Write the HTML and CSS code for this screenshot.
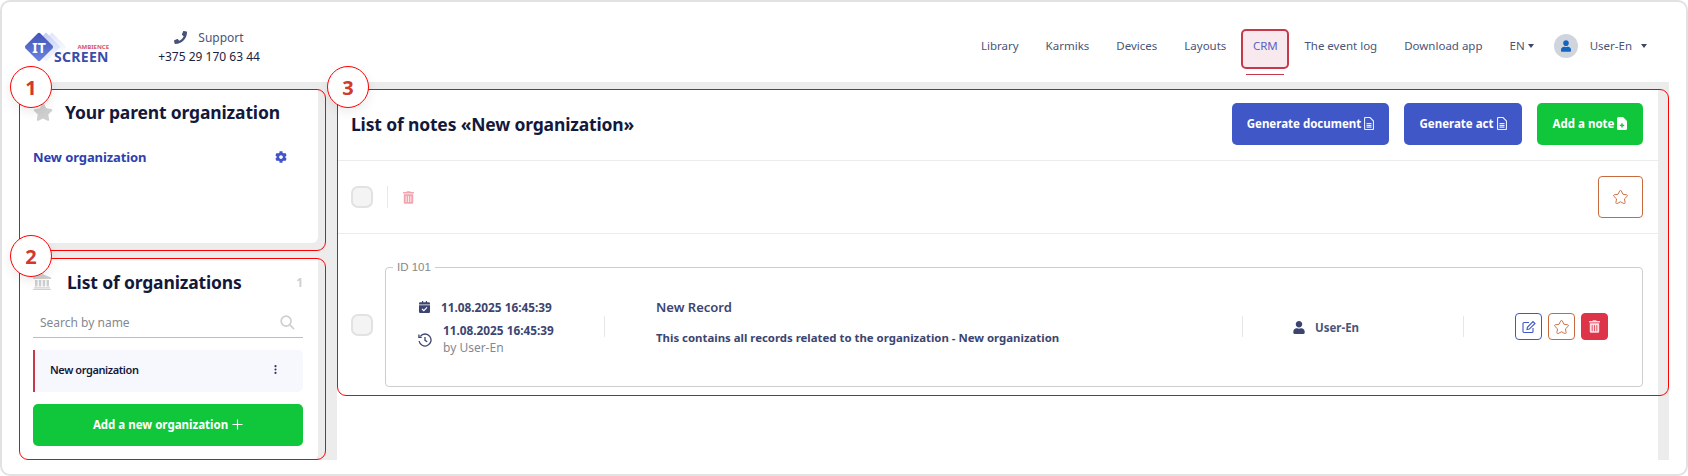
FILE: index.html
```html
<!DOCTYPE html>
<html lang="en">
<head>
<meta charset="utf-8">
<title>CRM</title>
<link rel="stylesheet" href="styles.css">
</head>
<body>
<div class="window">
  <header class="topbar">
    <svg class="logo" viewBox="0 0 90 36" width="90" height="36">
      <defs>
        <linearGradient id="lg" x1="0" y1="0" x2="1" y2="1"><stop offset="0" stop-color="#3f51b5"/><stop offset="1" stop-color="#6f86e0"/></linearGradient>
        <linearGradient id="fa" x1="0" y1="0" x2="0" y2="1"><stop offset="0" stop-color="#dfe4fa"/><stop offset=".75" stop-color="#fff"/></linearGradient>
        <linearGradient id="fb" x1="0" y1="0" x2="0" y2="1"><stop offset="0" stop-color="#c3cdf5"/><stop offset=".75" stop-color="#eef1fc"/></linearGradient>
      </defs>
      <path d="M29 1.500 L43.500 16 L29 30.500 L14.500 16 Z" fill="url(#fa)"/>
      <path d="M23 1.500 L37.500 16 L23 30.500 L8.500 16 Z" fill="url(#fb)"/>
      <rect x="5.500" y="5.500" width="21" height="21" rx="2" transform="rotate(45 16 16)" fill="url(#lg)"/>
      <text class="logo-it" x="16" y="21.500" text-anchor="middle">IT</text>
      <text class="logo-amb" x="86" y="18" text-anchor="end">AMBIENCE</text>
      <text class="logo-scr" x="31" y="30.500">SCREEN</text>
    </svg>
    <div class="support">
      <div class="support-top">
        <svg class="ic-phone" viewBox="0 0 512 512"><path d="M493.4 24.6l-104-24c-11.3-2.6-22.9 3.3-27.5 13.9l-48 112c-4.200 9.800-1.400 21.300 6.900 28l60.600 49.600c-36 76.700-98.900 140.500-177.200 177.200l-49.600-60.600c-6.800-8.300-18.200-11.100-28-6.900l-112 48C3.900 366.500-2 378.100.6 389.400l24 104C27.100 504.200 36.700 512 48 512c256.100 0 464-207.500 464-464 0-11.200-7.700-20.900-18.600-23.400z"/></svg>
        <span>Support</span>
      </div>
      <div class="support-phone">+375 29 170 63 44</div>
    </div>
    <nav class="nav">
      <a class="nav-link">Library</a>
      <a class="nav-link">Karmiks</a>
      <a class="nav-link">Devices</a>
      <a class="nav-link">Layouts</a>
      <a class="nav-link nav-active">CRM</a>
      <a class="nav-link">The event log</a>
      <a class="nav-link">Download app</a>
      <a class="nav-link nav-lang">EN<i class="caret"></i></a>
      <span class="avatar"><svg viewBox="0 0 448 512"><path d="M224 256c70.700 0 128-57.300 128-128S294.700 0 224 0 96 57.300 96 128s57.300 128 128 128zm89.600 32h-16.700c-22.200 10.200-46.900 16-72.900 16s-50.600-5.800-72.900-16h-16.700C60.200 288 0 348.200 0 422.400V464c0 26.500 21.500 48 48 48h352c26.500 0 48-21.500 48-48v-41.600c0-74.200-60.200-134.400-134.400-134.400z"/></svg></span>
      <a class="nav-link nav-user">User-En<i class="caret caret-user"></i></a>
    </nav>
  </header>

  <main class="stage">
    <aside class="sidebar">
      <section class="panel panel-parent">
        <div class="mark mark-1"><span class="badge">1</span></div>
        <div class="panel-head">
          <svg class="ic-star" viewBox="0 0 576 512"><path d="M259.300 17.800L194 150.200 47.900 171.500c-26.200 3.800-36.700 36.100-17.700 54.600l105.700 103-25 145.500c-4.500 26.300 23.200 46 46.400 33.700L288 439.600l130.700 68.700c23.200 12.200 50.900-7.400 46.400-33.700l-25-145.500 105.700-103c19-18.500 8.500-50.800-17.700-54.600L382 150.200 316.700 17.800c-11.700-23.600-45.600-23.900-57.400 0z"/></svg>
          <h2 class="panel-title">Your parent organization</h2>
        </div>
        <div class="parent-row">
          <span class="parent-name">New organization</span>
          <svg class="ic-gear" viewBox="0 0 512 512"><path d="M487.400 315.700l-42.600-24.600c4.300-23.200 4.300-47 0-70.200l42.600-24.600c4.900-2.800 7.100-8.600 5.500-14-11.100-35.600-30-67.800-54.700-94.600-3.800-4.100-10-5.100-14.800-2.300L380.800 110c-17.900-15.400-38.500-27.300-60.800-35.100V25.800c0-5.600-3.900-10.500-9.400-11.700-36.700-8.200-74.300-7.800-109.200 0-5.500 1.200-9.400 6.100-9.400 11.700V75c-22.200 7.900-42.800 19.800-60.800 35.100L88.700 85.500c-4.900-2.800-11-1.900-14.800 2.300-24.700 26.700-43.600 58.900-54.700 94.600-1.700 5.400.6 11.200 5.500 14L67.300 221c-4.300 23.200-4.300 47 0 70.200l-42.600 24.600c-4.900 2.800-7.100 8.600-5.500 14 11.100 35.600 30 67.800 54.700 94.600 3.800 4.100 10 5.100 14.800 2.300l42.600-24.600c17.900 15.400 38.500 27.300 60.800 35.100v49.200c0 5.600 3.900 10.500 9.400 11.700 36.700 8.200 74.300 7.800 109.200 0 5.500-1.200 9.400-6.100 9.400-11.700v-49.200c22.200-7.900 42.800-19.800 60.800-35.100l42.600 24.600c4.900 2.800 11 1.900 14.800-2.300 24.700-26.700 43.600-58.900 54.700-94.600 1.500-5.500-.7-11.300-5.600-14.100zM256 336c-44.100 0-80-35.900-80-80s35.900-80 80-80 80 35.900 80 80-35.900 80-80 80z"/></svg>
        </div>
      </section>

      <section class="panel panel-list">
        <div class="mark mark-2"><span class="badge">2</span></div>
        <div class="list-head">
          <svg class="ic-bank" viewBox="0 0 18 16"><path d="M9 0 L18 3.500 V5 H0 V3.500 Z M2 6 H4.500 V12.500 H2 Z M5.800 6 H8.300 V12.500 H5.800 Z M9.700 6 H12.200 V12.500 H9.700 Z M13.500 6 H16 V12.500 H13.500 Z M1 13.300 H17 V14.500 H1 Z M0 15 H18 V16 H0 Z"/></svg>
          <h2 class="panel-title list-title">List of organizations</h2>
          <span class="list-count">1</span>
        </div>
        <div class="search">
          <span class="search-text">Search by name</span>
          <svg class="ic-search" viewBox="0 0 16 16"><circle cx="6.500" cy="6.500" r="5.300"/><path d="M10.500 10.500 L15 15"/></svg>
        </div>
        <div class="org-item">
          <span class="org-name">New organization</span>
          <svg class="ic-dots" viewBox="0 0 4 12"><circle cx="2" cy="1.500" r="1.400"/><circle cx="2" cy="6" r="1.400"/><circle cx="2" cy="10.500" r="1.400"/></svg>
        </div>
        <button class="btn btn-green btn-wide">Add a new organization<svg class="ic-plus" viewBox="0 0 12 12"><path d="M6 0.500 V11.500 M0.500 6 H11.500"/></svg></button>
      </section>
    </aside>

    <section class="content">
      <div class="mark mark-3"><span class="badge">3</span></div>
      <div class="content-head">
        <h2 class="panel-title">List of notes «New organization»</h2>
        <div class="head-actions">
          <button class="btn btn-blue btn-doc">Generate document<svg class="ic-file" viewBox="0 0 10 13"><path d="M.5 1.500a1 1 0 0 1 1-1H6L9.500 4v7.500a1 1 0 0 1-1 1h-7a1 1 0 0 1-1-1z"/><path d="M2.500 6.500h5M2.500 8.300h5M2.500 10.100h5"/></svg></button>
          <button class="btn btn-blue btn-act">Generate act<svg class="ic-file" viewBox="0 0 10 13"><path d="M.5 1.500a1 1 0 0 1 1-1H6L9.500 4v7.500a1 1 0 0 1-1 1h-7a1 1 0 0 1-1-1z"/><path d="M2.500 6.500h5M2.500 8.300h5M2.500 10.100h5"/></svg></button>
          <button class="btn btn-green btn-note">Add a note<svg class="ic-file-add" viewBox="0 0 10 13"><path class="sheet" d="M0 1.500A1.500 1.500 0 0 1 1.500 0H6l4 4v7.500A1.500 1.500 0 0 1 8.500 13h-7A1.500 1.500 0 0 1 0 11.500z"/><path class="cross" d="M5 6.200v4.400M2.800 8.400h4.400"/></svg></button>
        </div>
      </div>
      <div class="toolbar">
        <span class="check check-off"></span>
        <span class="tool-sep"></span>
        <svg class="ic-trash-faint" viewBox="0 0 448 512"><path d="M32 464a48 48 0 0 0 48 48h288a48 48 0 0 0 48-48V128H32zm272-256a16 16 0 0 1 32 0v224a16 16 0 0 1-32 0zm-96 0a16 16 0 0 1 32 0v224a16 16 0 0 1-32 0zm-96 0a16 16 0 0 1 32 0v224a16 16 0 0 1-32 0zM432 32H312l-9.400-18.700A24 24 0 0 0 281.100 0H166.800a23.720 23.720 0 0 0-21.400 13.300L136 32H16A16 16 0 0 0 0 48v32a16 16 0 0 0 16 16h416a16 16 0 0 0 16-16V48a16 16 0 0 0-16-16z"/></svg>
        <button class="icon-btn icon-btn-lg"><svg class="ic-star-line ic-star-lg" viewBox="0 0 576 512"><path d="M259.300 17.800L194 150.200 47.900 171.500c-26.200 3.800-36.700 36.100-17.700 54.600l105.700 103-25 145.500c-4.500 26.300 23.200 46 46.400 33.700L288 439.600l130.700 68.700c23.200 12.200 50.900-7.400 46.400-33.700l-25-145.500 105.700-103c19-18.500 8.500-50.800-17.700-54.600L382 150.200 316.700 17.800c-11.700-23.600-45.600-23.900-57.400 0z"/></svg></button>
      </div>
      <div class="record">
        <span class="check"></span>
        <fieldset class="card">
          <legend class="card-legend">ID 101</legend>
          <div class="card-row">
            <div class="dates">
              <div class="date-line">
                <svg class="ic-cal" viewBox="0 0 11 12"><path d="M0 4.200H11V10.800A1.200 1.200 0 0 1 9.800 12H1.200A1.200 1.200 0 0 1 0 10.800ZM3 0H4.200V1.300H6.800V0H8V1.300H9.800A1.200 1.200 0 0 1 11 2.500V3.400H0V2.500A1.200 1.200 0 0 1 1.200 1.300H3Z"/><path class="tick" d="M3 8 L4.800 9.700 L8 6.300"/></svg>
                <span class="date-text">11.08.2025 16:45:39</span>
              </div>
              <div class="date-line date-line-2">
                <svg class="ic-hist" viewBox="0 0 14 14"><path d="M2.300 3.300A6 6 0 1 1 1.100 8"/><path d="M.9 1.500V4.300H3.700" /><path d="M7 4V7.300L9.200 8.800"/></svg>
                <div>
                  <div class="date-text">11.08.2025 16:45:39</div>
                  <div class="date-by">by User-En</div>
                </div>
              </div>
            </div>
            <span class="sep"></span>
            <div class="note">
              <div class="note-title">New Record</div>
              <div class="note-text">This contains all records related to the organization - New organization</div>
            </div>
            <span class="sep"></span>
            <div class="author">
              <svg class="ic-user" viewBox="0 0 448 512"><path d="M224 256c70.700 0 128-57.300 128-128S294.700 0 224 0 96 57.300 96 128s57.300 128 128 128zm89.600 32h-16.700c-22.200 10.200-46.900 16-72.900 16s-50.600-5.800-72.900-16h-16.700C60.200 288 0 348.200 0 422.400V464c0 26.500 21.500 48 48 48h352c26.500 0 48-21.500 48-48v-41.600c0-74.200-60.200-134.400-134.400-134.400z"/></svg>
              <span>User-En</span>
            </div>
            <span class="sep"></span>
            <div class="actions">
              <button class="icon-btn icon-btn-blue"><svg class="ic-edit" viewBox="0 0 14 14"><path d="M11 8V11.500A1 1 0 0 1 10 12.500H2A1 1 0 0 1 1 11.500V3.500A1 1 0 0 1 2 2.500H7"/><path d="M5 9.500 L5.400 7.300 L11 1.500 L13 3.500 L7.300 9.100 Z"/></svg></button>
              <button class="icon-btn"><svg class="ic-star-line ic-star-sm" viewBox="0 0 576 512"><path d="M259.300 17.800L194 150.200 47.900 171.500c-26.200 3.800-36.700 36.100-17.700 54.600l105.700 103-25 145.500c-4.500 26.300 23.200 46 46.400 33.700L288 439.600l130.700 68.700c23.200 12.200 50.900-7.400 46.400-33.700l-25-145.500 105.700-103c19-18.500 8.500-50.800-17.700-54.600L382 150.200 316.700 17.800c-11.700-23.600-45.600-23.900-57.400 0z"/></svg></button>
              <button class="icon-btn icon-btn-red"><svg class="ic-trash" viewBox="0 0 448 512"><path d="M32 464a48 48 0 0 0 48 48h288a48 48 0 0 0 48-48V128H32zm272-256a16 16 0 0 1 32 0v224a16 16 0 0 1-32 0zm-96 0a16 16 0 0 1 32 0v224a16 16 0 0 1-32 0zm-96 0a16 16 0 0 1 32 0v224a16 16 0 0 1-32 0zM432 32H312l-9.400-18.700A24 24 0 0 0 281.100 0H166.800a23.720 23.720 0 0 0-21.400 13.300L136 32H16A16 16 0 0 0 0 48v32a16 16 0 0 0 16 16h416a16 16 0 0 0 16-16V48a16 16 0 0 0-16-16z"/></svg></button>
            </div>
          </div>
        </fieldset>
      </div>
    </section>
  </main>
</div>
</body>
</html>
```
FILE: styles.css
```css
* { box-sizing: border-box; }
html, body { margin: 0; padding: 0; background: #fff; }
body { font-family: "Noto Sans", "Open Sans", sans-serif; color: #14183a; }
svg { display: block; flex: none; }
button { font-family: inherit; cursor: pointer; }
h2 { margin: 0; }

.window { width: 1688px; height: 476px; border: 2px solid #e2e2e2; border-radius: 10px; overflow: hidden; background: #fff; }

/* top bar */
.topbar { height: 80px; display: flex; align-items: center; padding: 0 39px 0 21px; }
.logo { margin-top: 13px; margin-right: 45px; }
.logo-it { font: 700 14px "Noto Sans", sans-serif; fill: #fff; }
.logo-amb { font: 700 6px "Noto Sans", sans-serif; fill: #d0586c; }
.logo-scr { font: 700 14px "Noto Sans", sans-serif; fill: #3a4ea8; letter-spacing: .3px; }
.support { width: 102px; margin-top: 8px; font-size: 12px; text-align: center; }
.support-top { display: flex; justify-content: center; align-items: center; gap: 11px; color: #4a5578; line-height: 20px; }
.ic-phone { width: 13px; height: 13px; fill: #47527a; }
.support-phone { color: #1c2240; line-height: 17px; }

.nav { margin-left: auto; display: flex; align-items: center; gap: 27px; font-size: 11.500px; color: #4a5578; margin-top: 7px; }
.nav-link { display: flex; align-items: center; line-height: 16px; white-space: nowrap; }
.nav-active { position: relative; width: 48px; height: 40px; justify-content: center; color: #5a62c4; background: #f7e9ed; border: 2px solid #c5394c; border-radius: 5px; margin: 6px -12px 0; padding-bottom: 6px; }
.nav-active::after { content: ""; position: absolute; left: 3px; right: 3px; bottom: -8px; height: 1px; background: #c5394c; }
.nav-lang { margin-right: -7px; }
.caret { width: 0; height: 0; margin-left: 3px; border: 3.500px solid transparent; border-top: 4px solid #3d4668; border-bottom: 0; }
.caret-user { margin-left: 9px; }
.avatar { width: 24px; height: 24px; border-radius: 50%; background: #d0d4dc; display: flex; align-items: center; justify-content: center; }
.avatar svg { width: 10px; height: 12px; fill: #1565c0; }
.nav-user { margin-left: -15px; }

/* stage */
.stage { height: 378px; margin: 0 17px; background: #ececec; padding-top: 7px; display: grid; grid-template-columns: 299px 1321px; column-gap: 19px; }
.sidebar { display: flex; flex-direction: column; gap: 15px; }
.panel { position: relative; background: #fff; border-radius: 0 0 6px 0; padding: 0 15px 0 14px; }
.panel-parent { height: 154px; }
.panel-list { height: 202px; }

/* annotation overlays */
.mark { position: absolute; border: 1px solid #f00; border-radius: 9px; pointer-events: none; z-index: 2; }
.mark-1 { inset: 0 -8px -8px 0; }
.mark-2 { inset: 0 -8px 0 0; }
.mark-3 { left: 0; right: -11px; top: 0; height: 307px; }
.badge { position: absolute; left: -10px; top: -24px; width: 42px; height: 42px; display: flex; align-items: center; justify-content: center; background: #fff; border: 1px solid #f00; border-radius: 50%; color: #d0392b; font-size: 20px; font-weight: 700; box-shadow: 0 4px 12px rgba(0,0,0,.08); }
.mark-3 .badge { left: -11px; }

.panel-title { font-size: 17.500px; font-weight: 700; letter-spacing: -.16px; line-height: 24px; color: #14183a; white-space: nowrap; }
.panel-head { display: flex; align-items: center; gap: 12px; height: 46px; }
.ic-star { width: 20px; height: 18px; fill: #cfcfcf; }
.parent-row { display: flex; align-items: center; justify-content: space-between; margin-top: 10px; padding-right: 16px; height: 24px; }
.parent-name { font-size: 13px; font-weight: 700; letter-spacing: -.1px; color: #2f3fae; }
.ic-gear { width: 12px; height: 12px; fill: #4354c8; }

.list-head { display: flex; align-items: center; height: 48px; }
.ic-bank { width: 18px; height: 16px; fill: #cfcfcf; margin-right: 16px; }
.list-count { margin-left: auto; font-size: 12px; font-weight: 700; color: #cfcfcf; }
.search { display: flex; align-items: center; justify-content: space-between; height: 32px; padding: 2px 8px 0 7px; border-bottom: 1px solid #bdbdbd; }
.search-text { font-size: 12px; color: #85888f; }
.ic-search { width: 15px; height: 15px; fill: none; stroke: #cfcfcf; stroke-width: 1.800; }
.org-item { display: flex; align-items: center; justify-content: space-between; height: 42px; margin-top: 12px; padding: 0 26px 3px 15px; background: #f7f8fe; border-left: 2px solid #c5394c; border-radius: 0 5px 5px 0; }
.org-name { font-size: 11px; font-weight: 600; letter-spacing: -.4px; color: #14183a; }
.ic-dots { width: 3px; height: 9px; fill: #2c3358; }

.btn { display: flex; align-items: center; justify-content: center; gap: 3px; height: 42px; border: 0; border-radius: 5px; color: #fff; font-size: 11.500px; font-weight: 700; padding: 0 0 1px; white-space: nowrap; }
.btn-green { background: #10c63a; }
.btn-blue { background: #3f57c7; }
.btn-wide { width: 100%; margin-top: 12px; }
.btn-doc { width: 157px; }
.btn-act { width: 118px; }
.btn-note { width: 106px; }
.ic-plus { width: 11px; height: 11px; fill: none; stroke: #fff; stroke-width: 1.300; margin-left: 1px; }
.ic-file { width: 10px; height: 13px; fill: none; stroke: #eaedfb; stroke-width: 1.200; }
.ic-file-add { width: 10px; height: 13px; }
.ic-file-add .sheet { fill: #fff; }
.ic-file-add .cross { fill: none; stroke: #10c63a; stroke-width: 1.400; }

/* content */
.content { position: relative; background: #fff; }
.content-head { height: 72px; display: flex; align-items: center; justify-content: space-between; padding: 0 15px 1px 14px; border-bottom: 1px solid #ececec; }
.head-actions { display: flex; gap: 15px; }
.toolbar { height: 73px; display: flex; align-items: center; padding: 0 15px 0 14px; border-bottom: 1px solid #ececec; }
.check { width: 22px; height: 22px; flex: none; background: #f4f4f4; border: 2px solid #e2e2e2; border-radius: 7px; }
.tool-sep { width: 1px; height: 22px; background: #e9e9e9; margin: 0 15px 0 14px; }
.ic-trash-faint { width: 11px; height: 13px; fill: #f3a5ae; }
.icon-btn { display: flex; align-items: center; justify-content: center; width: 27px; height: 27px; padding: 0; background: #fff; border: 1px solid #c76b3e; border-radius: 4px; }
.icon-btn-lg { width: 45px; height: 42px; margin-left: auto; }
.ic-star-line { fill: none; stroke: #c76b3e; stroke-width: 36; }
.ic-star-lg { width: 15px; height: 14px; }
.ic-star-sm { width: 15px; height: 14px; }
.icon-btn-blue { border-color: #3f57c7; }
.icon-btn-red { background: #dd3449; border-color: #dd3449; }
.ic-edit { width: 14px; height: 14px; fill: none; stroke: #3f57c7; stroke-width: 1.100; }
.ic-trash { width: 11px; height: 13px; fill: #fbdde2; }

.record { display: flex; align-items: center; gap: 12px; padding: 26px 15px 0 14px; }
.record > .check { margin-top: 2px; }
.card { flex: 1; min-width: 0; margin: 0; padding: 1px 0 8px; border: 1px solid #cdcdcd; border-radius: 4px; }
.card-legend { margin-left: 7px; padding: 0 4px; font: 11.500px/14px "Liberation Sans", sans-serif; color: #888; }
.card-row { display: grid; grid-template-columns: 218px 1px 637px 1px 220px 1px 1fr; align-items: center; height: 103px; }
.sep { width: 1px; height: 21px; background: #e6e6e6; }
.dates { padding: 3px 0 0 33px; display: flex; flex-direction: column; gap: 8px; }
.date-line { display: flex; align-items: center; gap: 11px; }
.date-line-2 { gap: 11px; }
.ic-cal { width: 11px; height: 12px; fill: #3c4570; margin-top: -1px; }
.ic-cal .tick { fill: none; stroke: #fff; stroke-width: 1.200; }
.ic-hist { width: 14px; height: 14px; fill: none; stroke: #3c4570; stroke-width: 1.300; margin-left: -1px; }
.date-text { font-size: 11.800px; font-weight: 700; color: #3c4570; line-height: 15px; white-space: nowrap; }
.date-by { font-size: 12px; color: #85888f; line-height: 19px; }
.note { padding: 0 0 9px 51px; color: #3c4570; }
.note-title { font-size: 13px; font-weight: 600; line-height: 16px; }
.note-text { font-size: 11.400px; font-weight: 700; line-height: 15px; margin-top: 15px; }
.author { display: flex; align-items: center; gap: 10px; padding: 1px 0 0 50px; font-size: 11.500px; font-weight: 700; color: #4a5578; }
.ic-user { width: 12px; height: 13px; fill: #3c4570; }
.actions { display: flex; gap: 6px; padding-left: 51px; }
```
